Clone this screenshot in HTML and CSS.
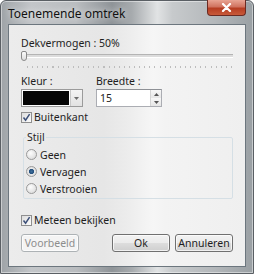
FILE: index.html
```html
<!DOCTYPE html>
<html lang="nl">
<head>
    <meta charset="UTF-8">
    <meta name="viewport" content="width=device-width, initial-scale=1.0">
    <title>Toenemende omtrek</title>
    <link rel="stylesheet" href="styles.css">
</head>
<body>
    <div class="window">
        <div class="titlebar">
            <span class="title">Toenemende omtrek</span>
            <span class="close">
                <svg width="11" height="9" viewBox="0 0 11 9">
                    <path d="M2 1 L9 8 M9 1 L2 8" stroke="#fff" stroke-width="2.2" stroke-linecap="round"/>
                </svg>
            </span>
        </div>

        <div class="client">
            <div class="label">Dekvermogen : 50%</div>
            <div class="slider">
                <div class="track"></div>
                <div class="thumb"></div>
                <div class="ticks"></div>
            </div>

            <div class="fields">
                <div class="field">
                    <span class="label">Kleur :</span>
                    <div class="colorpick">
                        <span class="swatch"></span>
                        <span class="drop">
                            <svg width="5" height="3" viewBox="0 0 5 3"><path d="M0 0 H5 L2.5 3 Z" fill="#6d6d6d"/></svg>
                        </span>
                    </div>
                </div>
                <div class="field">
                    <span class="label">Breedte :</span>
                    <div class="spin">
                        <span class="value">15</span>
                        <span class="arrows">
                            <span class="arrow"><svg width="5" height="3" viewBox="0 0 5 3"><path d="M0 3 H5 L2.5 0 Z" fill="#555"/></svg></span>
                            <span class="arrow"><svg width="5" height="3" viewBox="0 0 5 3"><path d="M0 0 H5 L2.5 3 Z" fill="#555"/></svg></span>
                        </span>
                    </div>
                </div>
            </div>

            <div class="check">
                <span class="box"><svg width="9" height="9" viewBox="0 0 9 9"><path d="M1.5 4.5 L3.6 7.2 L7.6 1.2" fill="none" stroke="#3c4f78" stroke-width="1.5"/></svg></span>
                Buitenkant
            </div>

            <fieldset class="group">
                <legend>Stijl</legend>
                <div class="radio"><span class="dot"></span>Geen</div>
                <div class="radio"><span class="dot on"></span>Vervagen</div>
                <div class="radio"><span class="dot"></span>Verstrooien</div>
            </fieldset>

            <div class="check later">
                <span class="box"><svg width="9" height="9" viewBox="0 0 9 9"><path d="M1.5 4.5 L3.6 7.2 L7.6 1.2" fill="none" stroke="#3c4f78" stroke-width="1.5"/></svg></span>
                Meteen bekijken
            </div>

            <div class="buttons">
                <button class="btn" disabled>Voorbeeld</button>
                <span class="spacer"></span>
                <button class="btn">Ok</button>
                <button class="btn">Annuleren</button>
            </div>
        </div>
    </div>
</body>
</html>
```

FILE: styles.css
```css
body {
    margin: 0;
    font-family: "Noto Sans", "Open Sans", sans-serif;
    font-size: 10.5px;
    color: #1e1e1e;
}

.window {
    width: 254px;
    height: 274px;
    box-sizing: border-box;
    display: flex;
    flex-direction: column;
    border: 1px solid #5a5f64;
    border-radius: 6px 6px 0 0;
    background: linear-gradient(to right, #9ea3a7 0, #c3c6c9 12%, #b9bcbf 30%, #8f9498 44%, #a7abae 52%, #e1e3e4 62%, #c7cacc 68%, #b3b7ba 85%, #9aa0a4 100%);
    box-shadow: inset 0 0 0 1px rgba(255, 255, 255, 0.45);
}

.titlebar {
    height: 23px;
    display: flex;
    align-items: flex-start;
    justify-content: space-between;
}

.title {
    margin: 4px 0 0 7px;
    font-size: 12px;
    color: #111;
    text-shadow: 0 0 6px rgba(255, 255, 255, 0.9);
}

.close {
    width: 37px;
    height: 15px;
    margin-right: 7px;
    margin-top: -1px;
    display: flex;
    align-items: center;
    justify-content: center;
    border: 1px solid #6b2a22;
    border-top: none;
    border-radius: 0 0 4px 4px;
    background: linear-gradient(#e8a493 0, #d0735f 45%, #b63d22 55%, #c85a3a 100%);
}

.client {
    flex: 1;
    margin: 0 7px 6px 7px;
    padding: 11px 12px 0 12px;
    display: flex;
    flex-direction: column;
    border: 1px solid #6c767e;
    background: linear-gradient(to right, #ececec 0, #e6e6e6 40%, #ececec 50%, #f6f6f6 61%, #f3f3f3 66%, #efefef 100%);
}

.label {
    line-height: 14px;
}

.slider {
    position: relative;
    height: 19px;
}

.track {
    margin-top: 4px;
    height: 2px;
    border-top: 1px solid #b4b4b4;
    border-bottom: 1px solid #fff;
    background: #dcdcdc;
}

.thumb {
    position: absolute;
    left: 0;
    top: 1px;
    width: 4px;
    height: 8px;
    border: 1px solid #8a8a8a;
    border-radius: 2px 2px 3px 3px;
    background: linear-gradient(#fbfbfb, #dedede);
}

.ticks {
    margin: 8px 1px 0 6px;
    height: 2px;
    background: repeating-linear-gradient(to right, #bdbdbd 0, #bdbdbd 1px, transparent 1px, transparent 5.1px);
}

.fields {
    margin-top: 5px;
    display: flex;
    gap: 13px;
}

.field {
    display: flex;
    flex-direction: column;
    gap: 1px;
}

.colorpick {
    width: 62px;
    height: 18px;
    box-sizing: border-box;
    display: flex;
    border: 1px solid #9b9b9b;
    background: #fff;
}

.swatch {
    flex: 1;
    margin: 1px;
    background: #060606;
}

.drop {
    width: 11px;
    display: flex;
    align-items: center;
    justify-content: center;
    border-left: 1px solid #c7c7c7;
    background: linear-gradient(#f4f4f4, #e2e2e2);
}

.spin {
    width: 66px;
    height: 18px;
    box-sizing: border-box;
    display: flex;
    border: 1px solid #abadb3;
    border-top-color: #8e9196;
    background: #fff;
}

.value {
    flex: 1;
    padding-left: 3px;
    line-height: 16px;
}

.arrows {
    width: 10px;
    display: flex;
    flex-direction: column;
    border-left: 1px solid #d4d4d4;
}

.arrow {
    flex: 1;
    display: flex;
    align-items: center;
    justify-content: center;
    background: linear-gradient(#f7f7f7, #e6e6e6);
}

.check {
    margin-top: 3px;
    display: flex;
    align-items: center;
    gap: 2px;
    line-height: 14px;
}

.check.later {
    margin-top: 14px;
}

.box {
    width: 9px;
    height: 9px;
    display: flex;
    border: 1px solid #8f8f8f;
    background: linear-gradient(135deg, #dcdcdc, #fcfcfc);
}

.group {
    margin: 6px 0 0 2px;
    padding: 2px 0 1px 2px;
    border: 1px solid #d5dfe5;
    border-radius: 2px;
}

.group legend {
    padding: 0 1px;
    line-height: 14px;
}

.radio {
    height: 17px;
    display: flex;
    align-items: center;
    gap: 3px;
}

.dot {
    width: 9px;
    height: 9px;
    border: 1px solid #9a9a9a;
    border-radius: 50%;
    background: radial-gradient(circle at 40% 35%, #fdfdfd, #d4d4d4);
}

.dot.on {
    background: radial-gradient(circle, #3e6f9c 0, #25507d 2.2px, #e9e9e9 3px, #d0d0d0 100%);
}

.buttons {
    margin-top: 7px;
    display: flex;
    gap: 5px;
}

.spacer {
    flex: 1;
}

.btn {
    width: 58px;
    height: 18px;
    padding: 0;
    font-family: inherit;
    font-size: 10.5px;
    color: #1e1e1e;
    border: 1px solid #707070;
    border-radius: 3px;
    background: linear-gradient(#f2f2f2 0, #ebebeb 50%, #dddddd 51%, #cfcfcf 100%);
    box-shadow: inset 0 0 0 1px rgba(255, 255, 255, 0.7);
}

.btn:disabled {
    color: #8d8d8d;
    border-color: #adb2b5;
    background: #f4f4f4;
}
```
